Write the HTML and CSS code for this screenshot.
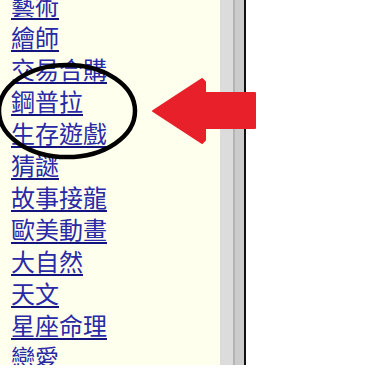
FILE: index.html
```html
<!DOCTYPE html>
<html lang="zh-Hant">
<head>
  <meta charset="UTF-8" />
  <meta name="viewport" content="width=device-width, initial-scale=1.0" />
  <title>分類</title>
  <link rel="stylesheet" href="styles.css">
</head>
<body>
<div class="frame">
  <div class="menu">
    <ul class="menu-list">
      <li><a href="#">藝術</a></li>
      <li><a href="#">繪師</a></li>
      <li><a href="#">交易合購</a></li>
      <li><a href="#">鋼普拉</a></li>
      <li><a href="#">生存遊戲</a></li>
      <li><a href="#">猜謎</a></li>
      <li><a href="#">故事接龍</a></li>
      <li><a href="#">歐美動畫</a></li>
      <li><a href="#">大自然</a></li>
      <li><a href="#">天文</a></li>
      <li><a href="#">星座命理</a></li>
      <li><a href="#">戀愛</a></li>
    </ul>
  </div>
  <div class="scrollbar">
    <div class="track"></div>
    <div class="groove"></div>
    <div class="thumb"></div>
    <div class="edge"></div>
  </div>

  <svg class="marks" width="375" height="382" viewBox="0 0 375 382">
    <ellipse cx="67" cy="111" rx="68" ry="46" fill="none" stroke="#000" stroke-width="4.5" />
    <polygon points="153,111 202,79 205,82 205,93 255,93 255,128 205,128 205,140 202,143" fill="#e8202a" stroke="#e8202a" stroke-width="2" stroke-linejoin="round" />
  </svg>
</div>
</body>
</html>
```

FILE: styles.css
```css
* { box-sizing: border-box; margin: 0; padding: 0; }

body {
  background: #ffffff;
  font-family: "Noto Sans CJK TC", "Noto Sans", sans-serif;
}

.frame {
  position: relative;
  display: flex;
  align-items: flex-start;
  width: 375px;
  height: 382px;
}

.menu {
  width: 220px;
  height: 365px;
  background: #ffffee;
  overflow: hidden;
}

.menu-list {
  list-style: none;
  margin-top: -11px;
  padding-left: 11px;
}
.menu-list li {
  font-size: 24px;
  line-height: 32px;
  height: 32px;
}
.menu-list a {
  color: #2a2aa6;
  text-decoration: underline;
  text-decoration-color: #141480;
  text-decoration-thickness: 2px;
  text-underline-offset: 3px;
}

.scrollbar {
  display: flex;
  height: 365px;
}
.track  { width: 13px; background: #dcdcdc; }
.groove { width: 2px;  background: #b4b4b4; }
.thumb  { width: 9px;  background: #cccccc; }
.edge   { width: 2px;  background: #111111; }

.marks {
  position: absolute;
  left: 0;
  top: 0;
  pointer-events: none;
}
```
